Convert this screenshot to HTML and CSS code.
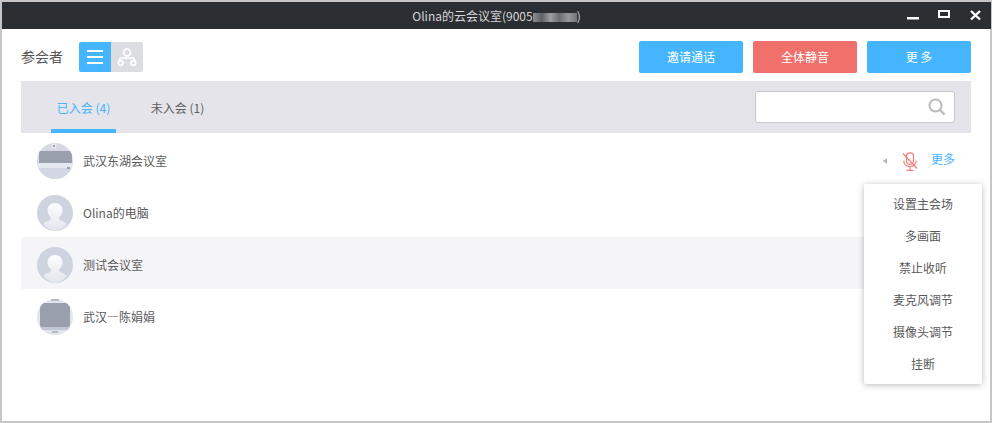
FILE: index.html
```html
<!DOCTYPE html>
<html lang="zh-CN">
<head>
<meta charset="utf-8">
<title>Olina的云会议室</title>
<link rel="stylesheet" href="styles.css">
</head>
<body>
<div class="window">
  <header class="titlebar">
    <div class="title">Olina的云会议室(9005<span class="blurred"></span>)</div>
    <div class="winctl">
      <svg class="wi" width="14" height="14" viewBox="0 0 14 14"><rect x="0" y="10" width="12" height="2.500" fill="#fff"/></svg>
      <svg class="wi" width="14" height="14" viewBox="0 0 14 14"><rect x="1" y="4" width="10" height="6" fill="none" stroke="#fff" stroke-width="2"/></svg>
      <svg class="wi" width="14" height="14" viewBox="0 0 14 14"><path d="M2 4 11 12.500M11 4 2 12.500" stroke="#fff" stroke-width="2.400" fill="none"/></svg>
    </div>
  </header>

  <section class="toolbar">
    <span class="label">参会者</span>
    <div class="toggle">
      <span class="tg tg-on">
        <svg width="16" height="14" viewBox="0 0 16 14"><path d="M0 1h16M0 7h16M0 13h16" stroke="#fff" stroke-width="2" fill="none"/></svg>
      </span>
      <span class="tg tg-off">
        <svg width="22" height="20" viewBox="0 0 22 20"><g fill="none" stroke="#fff" stroke-width="1.700"><circle cx="11" cy="5.500" r="3.500"/><circle cx="4.700" cy="16" r="2.300"/><circle cx="17.300" cy="16" r="2.300"/><path d="M3.500 13.800v-.8q0-2 2-2h11q2 0 2 2v.8"/></g></svg>
      </span>
    </div>
    <div class="actions">
      <button class="btn btn-blue">邀请通话</button>
      <button class="btn btn-red">全体静音</button>
      <button class="btn btn-blue">更 多</button>
    </div>
  </section>

  <nav class="tabbar">
    <a class="tab tab-active">已入会 (4)</a>
    <a class="tab">未入会 (1)</a>
    <div class="search">
      <svg width="18" height="18" viewBox="0 0 18 18"><circle cx="7.500" cy="7.500" r="6" fill="none" stroke="#bcbcbc" stroke-width="2"/><path d="M12 12l4.500 4.500" stroke="#bcbcbc" stroke-width="2.400"/></svg>
    </div>
  </nav>

  <main class="list">
    <div class="row">
      <svg class="avatar" viewBox="0 0 36 36"><defs><clipPath id="c1"><circle cx="18" cy="18" r="18"/></clipPath></defs><g clip-path="url(#c1)"><rect width="36" height="36" fill="#d6d9e3"/><circle cx="17" cy="3" r="2.500" fill="#eceef3"/><circle cx="17" cy="3" r="1.200" fill="#9a9eac"/><rect x="2" y="8" width="33" height="12" fill="#9a9fad"/><rect x="0" y="20" width="36" height="5" fill="#e6e8ef"/><rect x="0" y="25" width="36" height="11" fill="#d3d7e3"/><rect x="30" y="24" width="3" height="2" fill="#9a9fad"/></g></svg>
      <span class="name">武汉东湖会议室</span>
      <div class="rowact">
        <span class="caret"></span>
        <svg class="mic" width="16" height="19" viewBox="0 0 16 19"><g fill="none" stroke="#f27e7a" stroke-width="1.200"><rect x="4.500" y="0.800" width="7" height="11.500" rx="3.500"/><path d="M1.800 8.500q0 6 6.200 6t6.200-6M8 14.500v3.500M4.500 18.300h7M1 1.500l14 15"/></g></svg>
        <a class="more">更多</a>
      </div>
    </div>
    <div class="row">
      <svg class="avatar" viewBox="0 0 36 36"><use href="#person"/></svg>
      <span class="name">Olina的电脑</span>
    </div>
    <div class="row row-hover">
      <svg class="avatar" viewBox="0 0 36 36"><defs><linearGradient id="pg" x1="0" y1="0" x2="0" y2="1"><stop offset="0" stop-color="#fdfdfe"/><stop offset="1" stop-color="#e2e5ed"/></linearGradient><g id="person"><circle cx="18" cy="18" r="18" fill="#ced3e0"/><path d="M18 8c-4.500 0-7.500 3.300-7.500 7.500 0 3 1.500 5.500 3.500 7 .5 1-.5 2.500-2.500 3.200-2 .7-4 1.700-5.200 3.300A18 18 0 0 0 18 36a18 18 0 0 0 11.700-7c-1.200-1.600-3.200-2.600-5.200-3.300-2-.7-3-2.200-2.500-3.200 2-1.500 3.500-4 3.500-7C25.500 11.300 22.500 8 18 8z" fill="url(#pg)"/></g></defs><use href="#person"/></svg>
      <span class="name">测试会议室</span>
    </div>
    <div class="row">
      <svg class="avatar" viewBox="0 0 36 36"><defs><clipPath id="c4"><circle cx="18" cy="18" r="18"/></clipPath></defs><g clip-path="url(#c4)"><rect width="36" height="36" fill="#e3e5ec"/><rect x="3" y="4" width="30" height="24" rx="2" fill="#9a9fae"/><rect x="0" y="28" width="36" height="3" fill="#c3c7d3"/><rect x="14" y="0" width="8" height="2" fill="#b5b9c6"/><rect x="15" y="32" width="6" height="2" fill="#b5b9c6"/></g></svg>
      <span class="name">武汉—陈娟娟</span>
    </div>

    <ul class="menu">
      <li>设置主会场</li>
      <li>多画面</li>
      <li>禁止收听</li>
      <li>麦克风调节</li>
      <li>摄像头调节</li>
      <li>挂断</li>
    </ul>
  </main>
</div>
</body>
</html>
```
FILE: styles.css
```css
* { box-sizing: border-box; }
html, body { margin: 0; padding: 0; background: #fff; }
body {
  width: 992px;
  height: 423px;
  overflow: hidden;
  font-family: "Noto Sans CJK SC", "Noto Sans", sans-serif;
  font-size: 12px;
  color: #5a5a5a;
}
.window {
  width: 992px;
  height: 423px;
  border: 2px solid #c6c6c6;
  display: flex;
  flex-direction: column;
  background: #fff;
}
.titlebar {
  height: 27px;
  flex: none;
  margin-right: -1px;
  background: #2b2e33;
  position: relative;
  display: flex;
  align-items: center;
  justify-content: center;
  color: #d6d7d8;
}
.title { font-size: 12px; line-height: 27px; }
.blurred {
  display: inline-block;
  width: 44px;
  height: 9px;
  vertical-align: -1px;
  background: linear-gradient(90deg, #8b8d90, #5f6267 20%, #9c9ea1 40%, #6a6d71 60%, #96989b 80%, #74777b);
  filter: blur(0.6px);
}
.winctl {
  position: absolute;
  right: 8px;
  top: 5px;
  display: flex;
  gap: 17px;
}
.wi { display: block; }

.toolbar {
  height: 52px;
  flex: none;
  display: flex;
  align-items: center;
  padding: 4px 19px 0;
}
.label { font-size: 14px; color: #555; width: 58px; margin-bottom: 3px; }
.toggle { display: flex; border-radius: 2px; overflow: hidden; height: 30px; }
.tg { width: 32px; display: flex; align-items: center; justify-content: center; }
.tg-on { background: #45b5ff; }
.tg-off { background: #dcdde3; }
.actions { margin-left: auto; display: flex; gap: 10px; }
.btn {
  width: 104px;
  height: 32px;
  border: 0;
  border-radius: 2px;
  color: #fff;
  font: inherit;
  font-size: 12px;
  padding: 0 0 2px;
}
.btn-blue { background: #45b5ff; }
.btn-red { background: #f0716c; }

.tabbar {
  height: 52px;
  flex: none;
  margin: 0 19px;
  background: #e4e4ea;
  display: flex;
  align-items: stretch;
  padding-left: 30px;
}
.tab {
  width: 65px;
  margin-right: 29px;
  display: flex;
  align-items: center;
  justify-content: center;
  white-space: nowrap;
  font-size: 12px;
  color: #5f5f5f;
  border-bottom: 4px solid transparent;
  padding-top: 4px;
}
.tab-active { color: #45b5ff; border-bottom-color: #45b5ff; }
.search {
  margin: 10px 16px 10px auto;
  width: 200px;
  height: 32px;
  background: #fff;
  border: 1px solid #c6c6c6;
  border-radius: 3px;
  display: flex;
  align-items: center;
  justify-content: flex-end;
  padding-right: 8px;
}

.list { position: relative; flex: 1; padding: 0 19px; }
.row {
  height: 52px;
  display: flex;
  align-items: center;
  padding: 4px 16px 0;
}
.row-hover { background: #f5f5f8; }
.avatar { width: 36px; height: 36px; flex: none; margin-right: 10px; }
.name { font-size: 12px; color: #5a5a5a; margin-bottom: 2px; }
.rowact {
  margin-left: auto;
  display: flex;
  align-items: center;
}
.caret {
  width: 0;
  height: 0;
  border-style: solid;
  border-width: 3px 4px 3px 0;
  border-color: transparent #b5b5b5 transparent transparent;
  margin-right: 15px;
}
.mic { display: block; margin-right: 13px; }
.more { color: #45b5ff; font-size: 12px; margin-bottom: 6px; }

.menu {
  position: absolute;
  left: 862px;
  top: 51px;
  width: 118px;
  height: 200px;
  margin: 0;
  padding: 4px 0;
  list-style: none;
  background: #fff;
  border-radius: 2px;
  box-shadow: 0 1px 6px rgba(0, 0, 0, 0.28);
}
.menu li {
  height: 32px;
  line-height: 32px;
  text-align: center;
  font-size: 12px;
  color: #5a5a5a;
}
```
